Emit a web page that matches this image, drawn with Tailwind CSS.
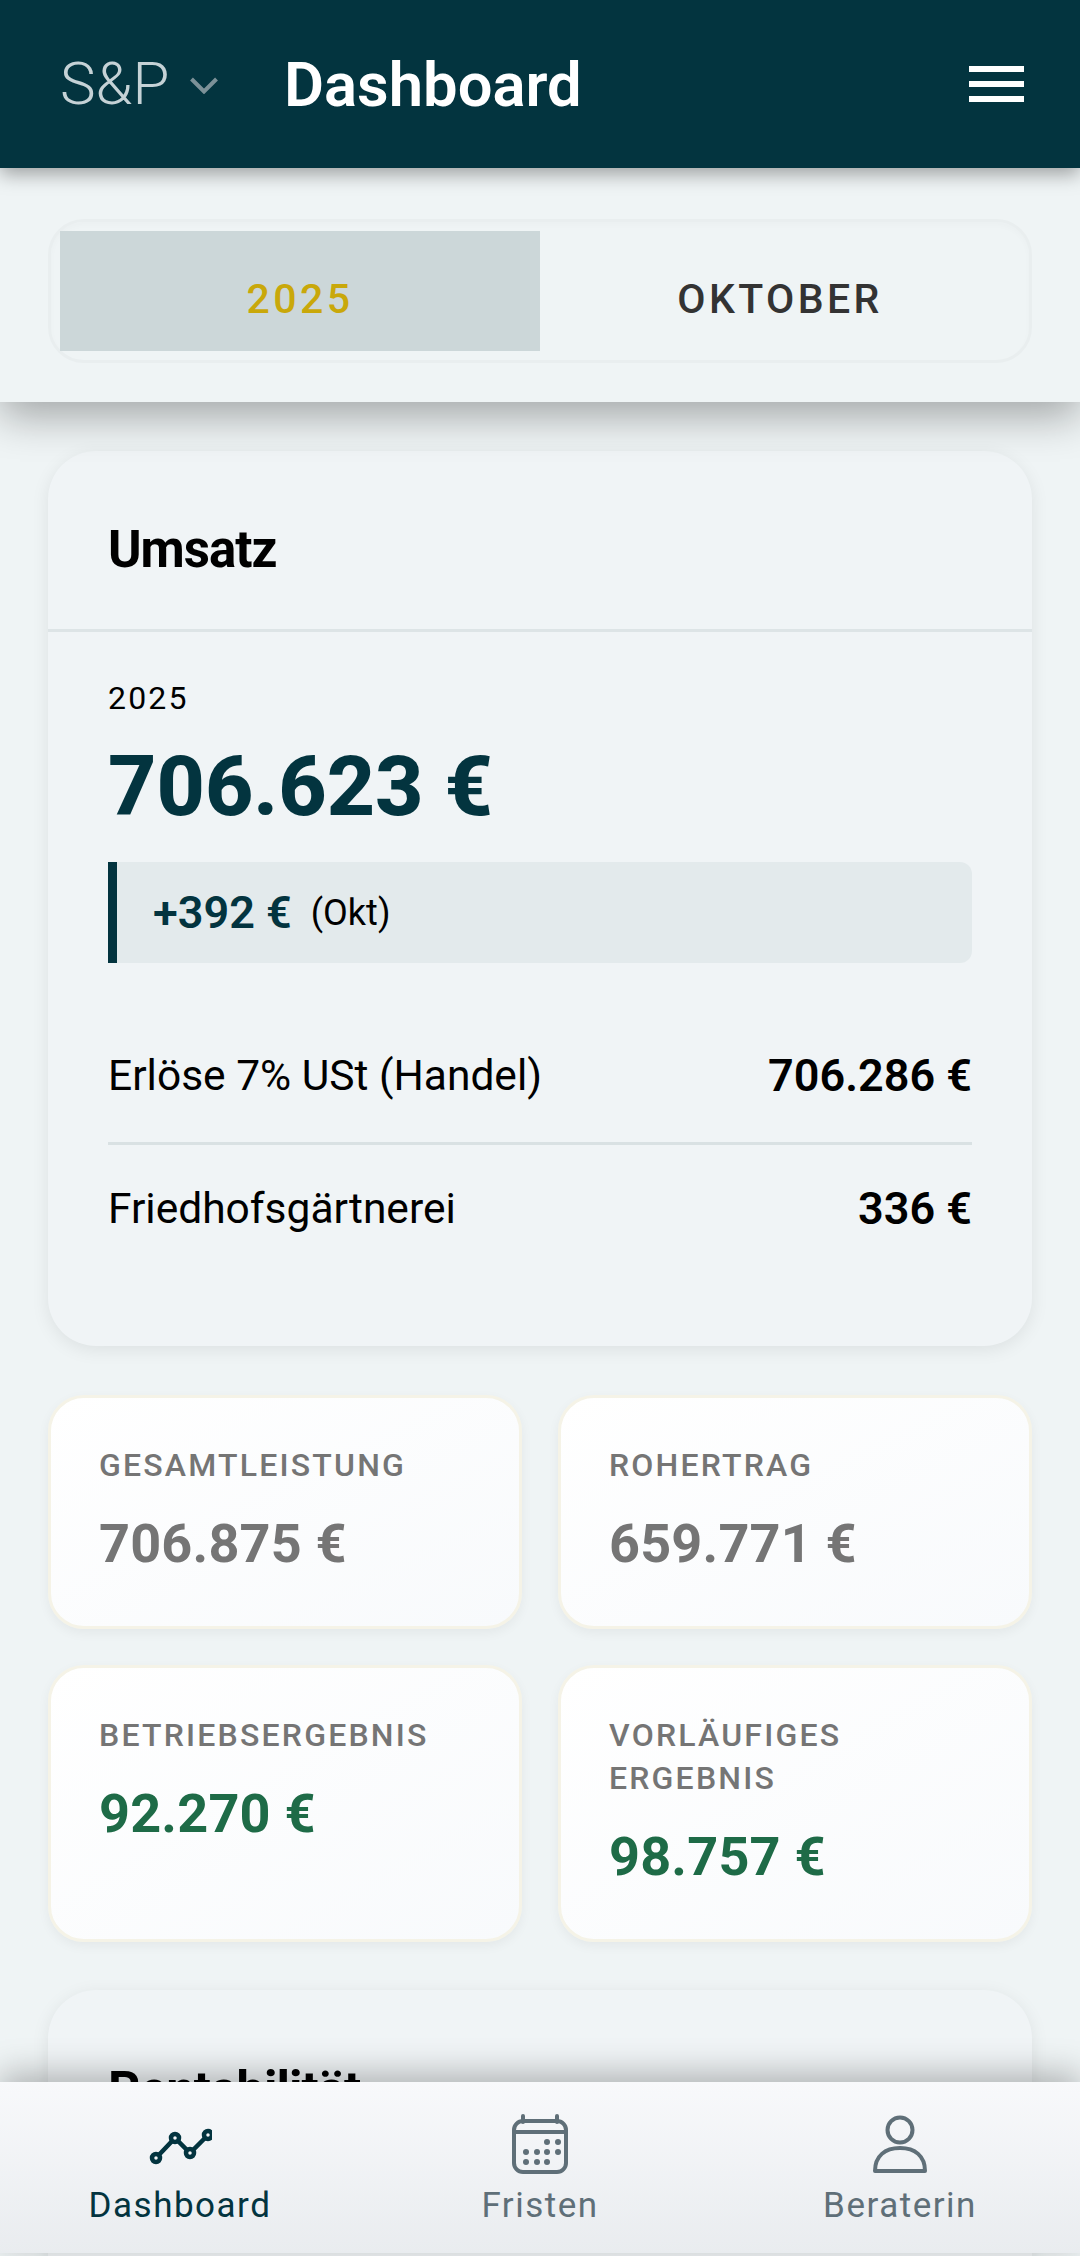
<!DOCTYPE html>
<html lang="de">
  <head>
    <meta charset="UTF-8" />
    <meta name="viewport" content="width=device-width, initial-scale=1.0" />
    <title>Dashboard</title>
    <script src="https://cdn.jsdelivr.net/npm/@tailwindcss/browser@4"></script>
  </head>
  <body class="bg-[#eff4f5] font-['Roboto',sans-serif]">
    <div class="relative h-[2256px] w-[1080px] overflow-hidden">
      <!-- Header -->
      <header class="relative z-20 flex h-[168px] items-center bg-[#03343f] pl-[60px] pr-[56px] shadow-[0_6px_18px_rgba(0,0,0,0.35)]">
        <span class="w-[110px] text-[60px] font-[350] leading-none text-[#c5d2d6]">S&amp;P</span>
        <svg class="ml-[20px] mt-[2px] h-[17px] w-[28px]" viewBox="0 0 28 17" fill="none" stroke="#7c9198" stroke-width="4"><path d="M1.5 2l12.5 12.5L26.5 2" /></svg>
        <h1 class="ml-[66px] mt-[3px] text-[61.5px] font-semibold leading-none text-white">Dashboard</h1>
        <button class="ml-auto flex h-[36px] w-[55px] flex-col justify-between">
          <span class="h-[6px] w-full bg-white"></span>
          <span class="h-[6px] w-full bg-white"></span>
          <span class="h-[6px] w-full bg-white"></span>
        </button>
      </header>

      <!-- Period selector -->
      <section class="relative z-10 h-[234px] bg-[#eff4f5] px-[48px] pt-[51px] shadow-[0_14px_40px_rgba(0,0,0,0.32)]">
        <div class="flex h-[144px] rounded-[36px] border-[3px] border-[#e9eeef] p-[9px] shadow-[inset_0_3px_6px_rgba(0,0,0,0.02)]">
          <div class="flex flex-1 items-center justify-center bg-[#ccd7d9] pt-[18px] text-[41px] font-medium tracking-[3.4px] text-[#c9a80a]">2025</div>
          <div class="flex flex-1 items-center justify-center pt-[18px] text-[41px] font-medium tracking-[3.4px] text-[#333333]">OKTOBER</div>
        </div>
      </section>

      <main class="px-[48px] pt-[49px]">
        <!-- Umsatz -->
        <article class="h-[895px] rounded-[48px] bg-[#f0f4f6] shadow-[0_4px_18px_rgba(0,0,0,0.08)]">
          <h2 class="flex h-[181px] items-center border-b-[3px] border-[#dde4e6] px-[60px] pt-[20px] text-[51px] font-bold tracking-[-1px] text-black">Umsatz</h2>
          <div class="px-[60px] pt-[46px]">
            <div class="text-[32px] font-[450] leading-[40px] tracking-[2.2px] text-black">2025</div>
            <div class="mt-[19px] text-[84px] font-extrabold leading-[100px] text-[#03343f]">706.623 €</div>
            <div class="mt-[25px] flex h-[101px] items-center rounded-r-[12px] border-l-[9px] border-[#03343f] bg-[#e3eaec] pl-[36px]">
              <span class="text-[45px] font-semibold text-[#03343f]">+392 €</span>
              <span class="ml-[19px] text-[36px] font-[450] text-black">(Okt)</span>
            </div>
            <div class="mt-[88px] flex items-center justify-between border-b-[3px] border-[#d9e1e3] pb-[41px] text-[42.5px] font-[450] leading-[50px] text-black">
              <span>Erlöse 7% USt (Handel)</span>
              <span class="text-[45px] font-semibold">706.286 €</span>
            </div>
            <div class="mt-[39px] flex items-center justify-between text-[42.5px] font-[450] leading-[50px] text-black">
              <span>Friedhofsgärtnerei</span>
              <span class="text-[45px] font-semibold">336 €</span>
            </div>
          </div>
        </article>

        <!-- Kennzahlen -->
        <div class="mt-[49px] grid grid-cols-2 gap-x-[36px] gap-y-[36px]">
          <div class="rounded-[36px] border-[3px] border-[#f5f3e7] bg-gradient-to-br from-white to-[#f8fafc] px-[48px] pb-[46px] pt-[46px] shadow-[0_4px_12px_rgba(0,0,0,0.05)]">
            <div class="text-[32px] font-medium leading-[43px] tracking-[2.2px] text-[#757575]">GESAMTLEISTUNG</div>
            <div class="mt-[21px] text-[54px] font-bold leading-[72px] tracking-[0.2px] text-[#757575]">706.875 €</div>
          </div>
          <div class="rounded-[36px] border-[3px] border-[#f5f3e7] bg-gradient-to-br from-white to-[#f8fafc] px-[48px] pb-[46px] pt-[46px] shadow-[0_4px_12px_rgba(0,0,0,0.05)]">
            <div class="text-[32px] font-medium leading-[43px] tracking-[2.2px] text-[#757575]">ROHERTRAG</div>
            <div class="mt-[21px] text-[54px] font-bold leading-[72px] tracking-[0.2px] text-[#757575]">659.771 €</div>
          </div>
          <div class="rounded-[36px] border-[3px] border-[#f5f3e7] bg-gradient-to-br from-white to-[#f8fafc] px-[48px] pb-[46px] pt-[46px] shadow-[0_4px_12px_rgba(0,0,0,0.05)]">
            <div class="text-[32px] font-medium leading-[43px] tracking-[2.2px] text-[#757575]">BETRIEBSERGEBNIS</div>
            <div class="mt-[21px] text-[54px] font-bold leading-[72px] tracking-[0.2px] text-[#1e6b47]">92.270 €</div>
          </div>
          <div class="rounded-[36px] border-[3px] border-[#f5f3e7] bg-gradient-to-br from-white to-[#f8fafc] px-[48px] pb-[46px] pt-[46px] shadow-[0_4px_12px_rgba(0,0,0,0.05)]">
            <div class="text-[32px] font-medium leading-[43px] tracking-[2.2px] text-[#757575]">VORLÄUFIGES ERGEBNIS</div>
            <div class="mt-[21px] text-[54px] font-bold leading-[72px] tracking-[0.2px] text-[#1e6b47]">98.757 €</div>
          </div>
        </div>

        <!-- Rentabilität, cut off by the nav -->
        <article class="mt-[48px] h-[400px] rounded-[48px] bg-[#f0f4f6] shadow-[0_4px_18px_rgba(0,0,0,0.08)]">
          <h2 class="flex h-[181px] items-center px-[60px] pt-[22px] text-[51px] font-bold tracking-[-1px] text-black">Rentabilität</h2>
        </article>
      </main>

      <!-- Bottom nav -->
      <nav class="absolute bottom-[3px] left-0 z-30 grid h-[171px] w-full grid-cols-3 bg-gradient-to-b from-[#f8f9fb] to-[#e9ecef] shadow-[0_-8px_32px_rgba(0,0,0,0.28)]">
        <a class="flex flex-col items-center pt-[30px] text-[#03343f]">
          <svg class="h-[64px] w-[64px]" viewBox="0 0 64 64" fill="none" stroke="#03343f" stroke-width="4.5">
            <path d="M8 46 L27 26 L42 41 L60 23" />
            <circle cx="8" cy="46" r="4" fill="#f5f6f8" />
            <circle cx="27" cy="26" r="4" fill="#f5f6f8" />
            <circle cx="42" cy="41" r="4" fill="#f5f6f8" />
            <circle cx="60" cy="23" r="4" fill="#f5f6f8" />
          </svg>
          <span class="mt-[10px] text-[35px] leading-[40px] tracking-[1.5px]">Dashboard</span>
        </a>
        <a class="flex flex-col items-center pt-[30px] text-[#5f6f78]">
          <svg class="h-[64px] w-[64px]" viewBox="0 0 64 64" fill="none" stroke="#5f6f78" stroke-width="4">
            <rect x="6" y="9" width="52" height="51" rx="9" />
            <path d="M6 20h52" />
            <path d="M15 4v6M49 4v6" stroke-linecap="round" />
            <g fill="#5f6f78" stroke="none">
              <circle cx="39" cy="30" r="3" /><circle cx="50" cy="30" r="3" />
              <circle cx="18" cy="40" r="3" /><circle cx="29" cy="40" r="3" /><circle cx="39" cy="40" r="3" /><circle cx="50" cy="40" r="3" />
              <circle cx="18" cy="50" r="3" /><circle cx="29" cy="50" r="3" /><circle cx="39" cy="50" r="3" />
            </g>
          </svg>
          <span class="mt-[10px] text-[35px] leading-[40px] tracking-[1.5px]">Fristen</span>
        </a>
        <a class="flex flex-col items-center pt-[30px] text-[#5f6f78]">
          <svg class="h-[64px] w-[64px]" viewBox="0 0 64 64" fill="none" stroke="#5f6f78" stroke-width="4">
            <circle cx="32" cy="18" r="12.5" />
            <path d="M7 59c0-15 10-23 25-23s25 8 25 23z" stroke-linejoin="round" />
          </svg>
          <span class="mt-[10px] text-[35px] leading-[40px] tracking-[1.5px]">Beraterin</span>
        </a>
      </nav>
    </div>
  </body>
</html>
